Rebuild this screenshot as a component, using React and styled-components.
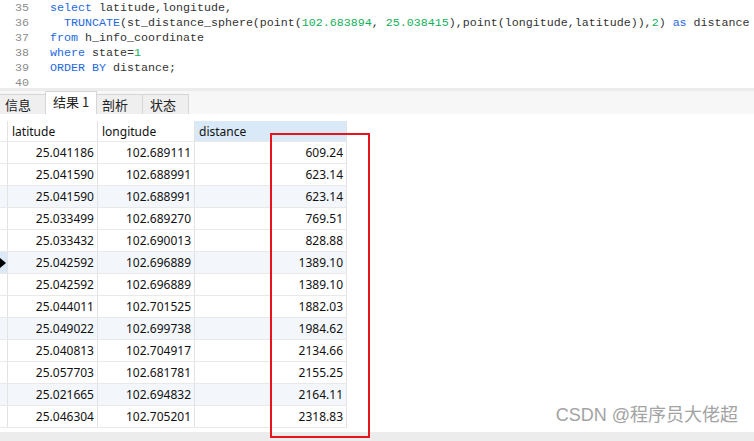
import React from 'react';
import styled, { createGlobalStyle } from 'styled-components';

const GlobalStyle = createGlobalStyle`
  html, body {
    margin: 0;
    padding: 0;
    background: #fff;
    overflow: hidden;
  }
`

// styled components
const Page = styled.div`
  position: relative;
  width: 754px;
  height: 441px;
  display: flex;
  flex-direction: column;
  background: #fff;
  overflow: hidden;
`
const Editor = styled.div`
  height: 88px;
  overflow: hidden;
  padding-top: 1px;
  box-sizing: border-box;
  font-family: "Liberation Mono", "DejaVu Sans Mono", monospace;
  font-size: 11.67px;
  line-height: 15px;
`
const CodeLine = styled.div`
  display: flex;
  white-space: pre;
  height: 15px;
`
const LineNo = styled.span`
  width: 29px;
  text-align: right;
  color: #8c8c8c;
  margin-right: 21px;
  flex: none;
`
const Kw = styled.span`
  color: #2468e0;
`
const Num = styled.span`
  color: #12b05a;
`
const Txt = styled.span`
  color: #333;
`
const Band = styled.div`
  height: ${p => p.h}px;
  background: #ececec;
  flex: none;
`
const TabBar = styled.div`
  height: 23px;
  display: flex;
  align-items: flex-end;
  background: #f7f7f7;
  font-family: "Noto Sans CJK SC", "Noto Sans", sans-serif;
  font-size: 13px;
  color: #222;
  flex: none;
`
const Tab = styled.div`
  box-sizing: border-box;
  width: ${p => p.w}px;
  height: ${p => (p.active ? 23 : 20)}px;
  background: ${p => (p.active ? '#fff' : '#efefef')};
  border: 1px solid #d6d6d6;
  border-bottom: none;
  border-left: ${p => (p.first ? 'none' : '1px solid #d6d6d6')};
  margin-left: ${p => (p.first ? 0 : -1)}px;
  display: flex;
  align-items: center;
  padding-left: ${p => p.pl}px;
  padding-bottom: ${p => (p.active ? 4 : 1)}px;
  line-height: 1;
`
const TableArea = styled.div`
  flex: 1;
  padding-top: 7px;
  font-family: "Noto Sans", "Noto Sans CJK SC", sans-serif;
  font-size: 12px;
  color: #111;
`
const Row = styled.div`
  display: grid;
  grid-template-columns: 8px 90px 97px 152px;
  height: ${p => (p.header ? 21 : 22)}px;
  width: 347px;
  background: ${p => (p.shade ? '#f3f7fb' : '#fff')};
  border-bottom: 1px solid #e9e9e9;
  box-sizing: border-box;
`
const Indicator = styled.div`
  border-right: 1px solid #e3e3e3;
  background: ${p => (p.current ? '#dce9f6' : 'transparent')};
  display: flex;
  align-items: center;
`
const Arrow = styled.div`
  width: 0;
  height: 0;
  border-top: 5px solid transparent;
  border-bottom: 5px solid transparent;
  border-left: 6px solid #000;
`
const Cell = styled.div`
  border-right: 1px solid #e3e3e3;
  display: flex;
  align-items: center;
  justify-content: ${p => (p.head ? 'flex-start' : 'flex-end')};
  padding: ${p => (p.head ? '0 0 0 4px' : '0 3px 0 0')};
  background: ${p => (p.sorted ? '#d9e9f7' : 'transparent')};
  white-space: nowrap;
  overflow: hidden;
`
const Watermark = styled.div`
  position: absolute;
  right: 16px;
  top: 400px;
  font-family: "Liberation Sans", "Noto Sans CJK SC", sans-serif;
  font-size: 18px;
  color: #a3a3a3;
  text-shadow: 0 0 1px #fff;
`
const Highlight = styled.div`
  position: absolute;
  left: 270px;
  top: 133px;
  width: 100px;
  height: 305px;
  box-sizing: border-box;
  border: 2px solid #e8131b;
`

const rows = [
  ['25.041186', '102.689111', '609.24'],
  ['25.041590', '102.688991', '623.14'],
  ['25.041590', '102.688991', '623.14'],
  ['25.033499', '102.689270', '769.51'],
  ['25.033432', '102.690013', '828.88'],
  ['25.042592', '102.696889', '1389.10'],
  ['25.042592', '102.696889', '1389.10'],
  ['25.044011', '102.701525', '1882.03'],
  ['25.049022', '102.699738', '1984.62'],
  ['25.040813', '102.704917', '2134.66'],
  ['25.057703', '102.681781', '2155.25'],
  ['25.021665', '102.694832', '2164.11'],
  ['25.046304', '102.705201', '2318.83'],
]

const tabs = [
  { label: '信息', w: 46, pl: 5 },
  { label: '结果 1', w: 52, pl: 7, active: true },
  { label: '剖析', w: 47, pl: 5 },
  { label: '状态', w: 47, pl: 7 },
]

const App = () => {
  return (
    <Page>
      <GlobalStyle />
      <Editor>
        <CodeLine><LineNo>35</LineNo><Kw>select</Kw><Txt> latitude,longitude,</Txt></CodeLine>
        <CodeLine>
          <LineNo>36</LineNo>
          <Txt>  </Txt><Kw>TRUNCATE</Kw><Txt>(st_distance_sphere(point(</Txt><Num>102.683894</Num><Txt>, </Txt>
          <Num>25.038415</Num><Txt>),point(longitude,latitude)),</Txt><Num>2</Num><Txt>) </Txt><Kw>as</Kw><Txt> distance</Txt>
        </CodeLine>
        <CodeLine><LineNo>37</LineNo><Kw>from</Kw><Txt> h_info_coordinate</Txt></CodeLine>
        <CodeLine><LineNo>38</LineNo><Kw>where</Kw><Txt> state=</Txt><Num>1</Num></CodeLine>
        <CodeLine><LineNo>39</LineNo><Kw>ORDER BY</Kw><Txt> distance;</Txt></CodeLine>
        <CodeLine><LineNo>40</LineNo></CodeLine>
      </Editor>
      <Band h={3} />
      <TabBar>
        {tabs.map((t, i) => (
          <Tab key={t.label} w={t.w} pl={t.pl} active={t.active} first={i === 0}>{t.label}</Tab>
        ))}
      </TabBar>
      <TableArea>
        <Row header>
          <Indicator />
          <Cell head>latitude</Cell>
          <Cell head>longitude</Cell>
          <Cell head sorted>distance</Cell>
        </Row>
        {rows.map((r, i) => (
          <Row key={i} shade={i % 3 === 2}>
            <Indicator current={i === 5}>{i === 5 && <Arrow />}</Indicator>
            <Cell>{r[0]}</Cell>
            <Cell>{r[1]}</Cell>
            <Cell>{r[2]}</Cell>
          </Row>
        ))}
      </TableArea>
      <Band h={9} />
      <Watermark>CSDN @程序员大佬超</Watermark>
      <Highlight />
    </Page>
  )
}
export default App;
